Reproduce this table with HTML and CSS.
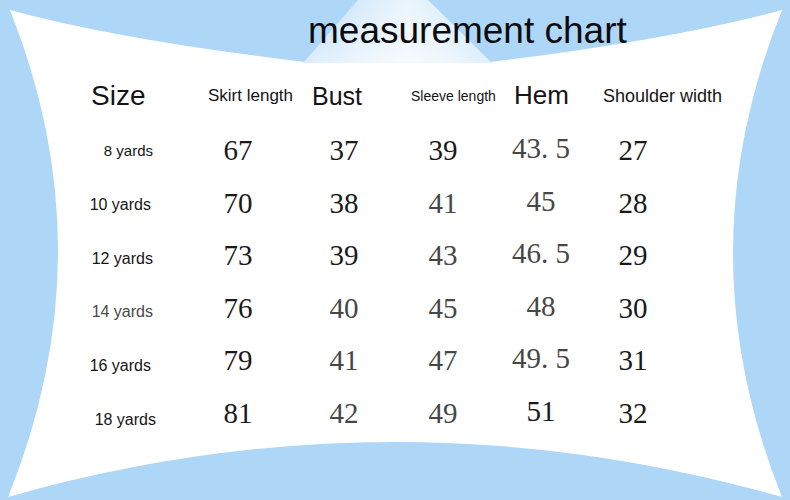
FILE: index.html
```html
<!DOCTYPE html>
<html lang="en">
<head>
<meta charset="utf-8">
<title>measurement chart</title>
<link rel="stylesheet" href="styles.css">
</head>
<body>
<div class="stage">
  <svg class="deco" width="790" height="500" viewBox="0 0 790 500" aria-hidden="true">
    <defs>
      <linearGradient id="glow" x1="0" y1="0" x2="1" y2="0">
        <stop offset="0" stop-color="#b3d9f8"/>
        <stop offset="0.3" stop-color="#d7ebfb"/>
        <stop offset="0.55" stop-color="#ebf5fd"/>
        <stop offset="0.8" stop-color="#d9ecfb"/>
        <stop offset="1" stop-color="#b8dbf8"/>
      </linearGradient>
      <linearGradient id="fade" x1="0" y1="0" x2="0" y2="1">
        <stop offset="0" stop-color="#ffffff" stop-opacity="0"/>
        <stop offset="1" stop-color="#ffffff" stop-opacity="0.55"/>
      </linearGradient>
    </defs>
    <path d="M10,10 Q120,40 305,62 L490,62 Q670,40 782,10 Q684,253 782,497 Q395,387 8,497 Q107,253 10,10 Z" fill="#ffffff"/>
    <polygon points="358,0 428,0 492,63 303,63" fill="url(#glow)"/>
    <polygon points="358,0 428,0 492,63 303,63" fill="url(#fade)"/>
  </svg>

  <div class="content">
    <h1 class="title">measurement chart</h1>

    <div class="head-row">
      <div class="hcell hcell--size">Size</div>
      <div class="hcell hcell--skirt">Skirt length</div>
      <div class="hcell hcell--bust">Bust</div>
      <div class="hcell hcell--sleeve">Sleeve length</div>
      <div class="hcell hcell--hem">Hem</div>
      <div class="hcell hcell--shoulder">Shoulder width</div>
    </div>

    <div class="body-row">
      <div class="col col--labels">
        <div class="label label--small">8 yards</div>
        <div class="label label--left">10 yards</div>
        <div class="label">12 yards</div>
        <div class="label label--dim">14 yards</div>
        <div class="label label--left">16 yards</div>
        <div class="label label--wide">18 yards</div>
      </div>
      <div class="col col--skirt">
        <div class="num">67</div>
        <div class="num">70</div>
        <div class="num">73</div>
        <div class="num">76</div>
        <div class="num">79</div>
        <div class="num">81</div>
      </div>
      <div class="col col--bust">
        <div class="num">37</div>
        <div class="num">38</div>
        <div class="num">39</div>
        <div class="num dim">40</div>
        <div class="num dim">41</div>
        <div class="num dim">42</div>
      </div>
      <div class="col col--sleeve">
        <div class="num">39</div>
        <div class="num dim">41</div>
        <div class="num dim">43</div>
        <div class="num dim">45</div>
        <div class="num dim">47</div>
        <div class="num dim">49</div>
      </div>
      <div class="col col--hem">
        <div class="num dim">43.&nbsp;5</div>
        <div class="num dim">45</div>
        <div class="num dim">46.&nbsp;5</div>
        <div class="num dim">48</div>
        <div class="num dim">49.&nbsp;5</div>
        <div class="num">51</div>
      </div>
      <div class="col col--shoulder">
        <div class="num">27</div>
        <div class="num">28</div>
        <div class="num">29</div>
        <div class="num">30</div>
        <div class="num">31</div>
        <div class="num">32</div>
      </div>
    </div>
  </div>
</div>
</body>
</html>
```

FILE: styles.css
```css
html, body {
  margin: 0;
  padding: 0;
}

body {
  width: 790px;
  height: 500px;
  overflow: hidden;
  background: #aed6f7;
  font-family: "Liberation Sans", Arial, sans-serif;
  color: #111111;
}

.stage {
  display: grid;
  width: 790px;
  height: 500px;
}

.deco,
.content {
  grid-area: 1 / 1;
}

.deco {
  display: block;
}

.content {
  padding-top: 9px;
  display: flex;
  flex-direction: column;
}

.title {
  margin: 0;
  padding-left: 308px;
  font-size: 37px;
  font-weight: normal;
  line-height: 44px;
  height: 44px;
  color: #0c0c10;
}

.head-row {
  margin-top: 23px;
  height: 40px;
  display: flex;
  align-items: center;
  padding-left: 91px;
  color: #141414;
}

.hcell {
  white-space: nowrap;
  line-height: 1.15;
}

.hcell--size { width: 117px; font-size: 28px; }
.hcell--skirt { width: 104px; font-size: 17px; }
.hcell--bust { width: 99px; font-size: 25px; }
.hcell--sleeve { width: 103px; font-size: 14px; }
.hcell--hem { width: 89px; font-size: 26px; }
.hcell--shoulder { font-size: 18px; }

.body-row {
  margin-top: 8px;
  display: flex;
  align-items: flex-start;
}

.col {
  display: flex;
  flex-direction: column;
}

.col--labels {
  width: 153px;
  margin-right: 35px;
  align-items: flex-end;
}

.label {
  height: 53.8px;
  line-height: 53.8px;
  font-size: 16px;
  color: #161616;
  white-space: nowrap;
}

.label--small { font-size: 15px; }
.label--left { margin-right: 2px; }
.label--dim { color: #4a4a4a; }
.label--wide { margin-right: -3px; }

.num {
  height: 52.5px;
  line-height: 52.5px;
  text-align: center;
  font-family: "Liberation Serif", "Times New Roman", serif;
  font-size: 29px;
  color: #1a1a1a;
  white-space: nowrap;
}

.num.dim { color: #474747; }

.col--skirt { width: 100px; }
.col--bust { width: 112px; }
.col--sleeve { width: 86px; }
.col--hem { width: 110px; margin-top: -2px; }
.col--shoulder { width: 74px; }
```
